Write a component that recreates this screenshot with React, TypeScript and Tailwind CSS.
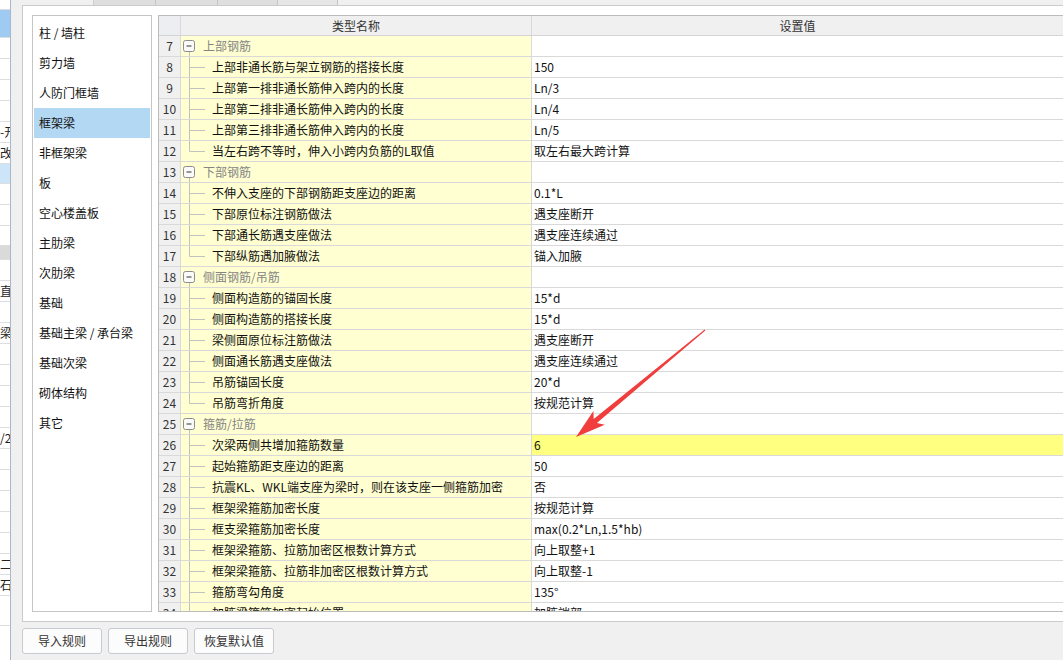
import React from "react";

type GridRow =
  | { n: number; group: string }
  | { n: number; name: string; value: string; last?: boolean; hl?: boolean };

// 左侧分类
const CATEGORIES = [
  "柱 / 墙柱",
  "剪力墙",
  "人防门框墙",
  "框架梁",
  "非框架梁",
  "板",
  "空心楼盖板",
  "主肋梁",
  "次肋梁",
  "基础",
  "基础主梁 / 承台梁",
  "基础次梁",
  "砌体结构",
  "其它",
];

const ROWS: GridRow[] = [
  { n: 7, group: "上部钢筋" },
  { n: 8, name: "上部非通长筋与架立钢筋的搭接长度", value: "150" },
  { n: 9, name: "上部第一排非通长筋伸入跨内的长度", value: "Ln/3" },
  { n: 10, name: "上部第二排非通长筋伸入跨内的长度", value: "Ln/4" },
  { n: 11, name: "上部第三排非通长筋伸入跨内的长度", value: "Ln/5" },
  { n: 12, name: "当左右跨不等时，伸入小跨内负筋的L取值", value: "取左右最大跨计算", last: true },
  { n: 13, group: "下部钢筋" },
  { n: 14, name: "不伸入支座的下部钢筋距支座边的距离", value: "0.1*L" },
  { n: 15, name: "下部原位标注钢筋做法", value: "遇支座断开" },
  { n: 16, name: "下部通长筋遇支座做法", value: "遇支座连续通过" },
  { n: 17, name: "下部纵筋遇加腋做法", value: "锚入加腋", last: true },
  { n: 18, group: "侧面钢筋/吊筋" },
  { n: 19, name: "侧面构造筋的锚固长度", value: "15*d" },
  { n: 20, name: "侧面构造筋的搭接长度", value: "15*d" },
  { n: 21, name: "梁侧面原位标注筋做法", value: "遇支座断开" },
  { n: 22, name: "侧面通长筋遇支座做法", value: "遇支座连续通过" },
  { n: 23, name: "吊筋锚固长度", value: "20*d" },
  { n: 24, name: "吊筋弯折角度", value: "按规范计算", last: true },
  { n: 25, group: "箍筋/拉筋" },
  { n: 26, name: "次梁两侧共增加箍筋数量", value: "6", hl: true },
  { n: 27, name: "起始箍筋距支座边的距离", value: "50" },
  { n: 28, name: "抗震KL、WKL端支座为梁时，则在该支座一侧箍筋加密", value: "否" },
  { n: 29, name: "框架梁箍筋加密长度", value: "按规范计算" },
  { n: 30, name: "框支梁箍筋加密长度", value: "max(0.2*Ln,1.5*hb)" },
  { n: 31, name: "框架梁箍筋、拉筋加密区根数计算方式", value: "向上取整+1" },
  { n: 32, name: "框架梁箍筋、拉筋非加密区根数计算方式", value: "向上取整-1" },
  { n: 33, name: "箍筋弯勾角度", value: "135°" },
  { n: 34, name: "加腋梁箍筋加密起始位置", value: "加腋端部" },
];

// 背后窗口露出的一条
const BACKDROP = [
  { h: 10, bg: "bg-white", text: "" },
  { h: 28, bg: "bg-[#9fcbf3]", text: "" },
  { h: 21, bg: "bg-white", text: "" },
  { h: 21, bg: "bg-white", text: "" },
  { h: 21, bg: "bg-white", text: "" },
  { h: 21, bg: "bg-white", text: "" },
  { h: 21, bg: "bg-white", text: "-开" },
  { h: 21, bg: "bg-white", text: "改打" },
  { h: 20, bg: "bg-[#cde5f8]", text: "" },
  { h: 21, bg: "bg-white", text: "" },
  { h: 21, bg: "bg-white", text: "" },
  { h: 20, bg: "bg-white", text: "" },
  { h: 14, bg: "bg-[#dadada]", text: "" },
  { h: 21, bg: "bg-white", text: "" },
  { h: 21, bg: "bg-white", text: "直" },
  { h: 21, bg: "bg-white", text: "" },
  { h: 21, bg: "bg-white", text: "梁" },
  { h: 21, bg: "bg-white", text: "" },
  { h: 21, bg: "bg-white", text: "" },
  { h: 21, bg: "bg-white", text: "" },
  { h: 21, bg: "bg-white", text: "" },
  { h: 21, bg: "bg-white", text: "/2" },
  { h: 21, bg: "bg-white", text: "" },
  { h: 21, bg: "bg-white", text: "" },
  { h: 21, bg: "bg-white", text: "" },
  { h: 21, bg: "bg-white", text: "" },
  { h: 21, bg: "bg-white", text: "" },
  { h: 21, bg: "bg-white", text: "二" },
  { h: 21, bg: "bg-white", text: "石" },
  { h: 30, bg: "bg-white", text: "" },
];

const BackdropStrip = () => (
  <div className="w-[11px] h-full shrink-0 border-r border-[#a9b8c8] bg-white flex flex-col overflow-hidden">
    {BACKDROP.map((r, i) => (
      <div
        key={i}
        className={`${r.bg} shrink-0 border-b border-[#dedede] flex items-center overflow-hidden whitespace-nowrap text-[12px] text-[#222] leading-none`}
        style={{ height: r.h }}
      >
        {r.text}
      </div>
    ))}
  </div>
);

// 树形连接线
const TreeChild = ({ last }: { last?: boolean }) => (
  <svg width="31" height="20" className="shrink-0">
    <line x1="8.5" y1="0" x2="8.5" y2={last ? 10.5 : 20} stroke="#c2c2c2" />
    <line x1="8.5" y1="10.5" x2="24" y2="10.5" stroke="#c2c2c2" />
  </svg>
);

const TreeGroup = () => (
  <svg width="22" height="20" className="shrink-0">
    <rect x="2.5" y="4.5" width="11" height="11" rx="2" fill="#fafafa" stroke="#8c8c8c" />
    <line x1="5.5" y1="10" x2="10.5" y2="10" stroke="#333" />
    <line x1="8.5" y1="16" x2="8.5" y2="20" stroke="#c2c2c2" />
  </svg>
);

const RuleRow = ({ row }: { row: GridRow }) => {
  const isGroup = "group" in row;
  return (
    <div className="h-[21px] shrink-0 flex border-b border-[#d9d9d9]">
      <div className="w-[22px] shrink-0 border-r border-[#d9d9d9] bg-[#f0f0f0] flex items-center justify-center text-[#333]">
        {row.n}
      </div>
      <div className="w-[351px] shrink-0 border-r border-[#d9d9d9] bg-[#ffffd2] flex items-center overflow-hidden whitespace-nowrap">
        {isGroup ? (
          <>
            <TreeGroup />
            <span className="text-[#858585]">{row.group}</span>
          </>
        ) : (
          <>
            <TreeChild last={row.last} />
            <span className="text-[#111]">{row.name}</span>
          </>
        )}
      </div>
      <div
        className={`flex-1 flex items-center pl-[2px] whitespace-nowrap text-[#111] ${
          !isGroup && row.hl ? "bg-[#ffff80]" : "bg-white"
        }`}
      >
        {isGroup ? "" : row.value}
      </div>
    </div>
  );
};

const TabStrip = () => (
  <div className="h-[5px] shrink-0 flex">
    <div className="w-[72px] border-r border-[#d0d0d0]" />
    <div className="w-[62px] bg-[#dedede] border-r border-[#c4c4c4]" />
    <div className="w-[62px] bg-[#dedede] border-r border-[#c4c4c4]" />
    <div className="w-[60px] bg-[#dedede] border-r border-[#c4c4c4]" />
    <div className="w-[60px] bg-[#e6e6e6] border-r border-[#c4c4c4]" />
    <div className="flex-1 bg-[#f0f0f0]" />
  </div>
);

const DialogButton = ({ label }: { label: string }) => (
  <button className="w-[80px] h-[26px] rounded-[3px] border border-[#c6cbd1] bg-[#fcfcfc] text-[12px] text-[#333] flex items-center justify-center">
    {label}
  </button>
);

const Arrow = () => (
  <svg className="absolute inset-0 pointer-events-none" width="1063" height="660">
    <polygon
      points="705.3,330.4 596.9,422.9 604.8,424.8 576,437 593.4,411 593.7,419.1 704.7,329.6"
      fill="#f23d3d"
    />
  </svg>
);

export default function App() {
  return (
    <div className="relative w-[1063px] h-[660px] overflow-hidden bg-[#f0f0f0] flex font-['Microsoft_YaHei','Noto_Sans_CJK_SC',sans-serif] text-[12px] leading-none">
      <BackdropStrip />

      <div className="flex-1 flex flex-col pl-[11px] min-w-0">
        <TabStrip />

        {/* 主面板 */}
        <div className="h-[617px] shrink-0 flex gap-[6px] bg-white border border-r-0 border-[#cbcbcb] pl-[9px] py-[9px]">
          {/* 分类列表 */}
          <div className="w-[120px] shrink-0 border border-[#c5c5c5] bg-white pt-[2px] px-px flex flex-col">
            {CATEGORIES.map((c) => (
              <div
                key={c}
                className={`h-[30px] shrink-0 flex items-center pl-[5px] text-[#111] whitespace-nowrap ${
                  c === "框架梁" ? "bg-[#b3d8f4]" : ""
                }`}
              >
                {c}
              </div>
            ))}
          </div>

          {/* 规则表格 */}
          <div className="flex-1 min-w-0 flex flex-col border border-r-0 border-[#bcbcbc] overflow-hidden">
            <div className="h-[20px] shrink-0 flex border-b border-[#d4d4d4] bg-[#f0f0f0] text-[#333]">
              <div className="w-[22px] shrink-0 border-r border-[#d9d9d9] bg-[#eceef1]" />
              <div className="w-[351px] shrink-0 border-r border-[#d9d9d9] flex items-center justify-center">
                类型名称
              </div>
              <div className="flex-1 flex items-center justify-center">设置值</div>
            </div>
            {ROWS.map((r) => (
              <RuleRow key={r.n} row={r} />
            ))}
          </div>
        </div>

        {/* 底部按钮 */}
        <div className="flex gap-[6px] mt-[6px]">
          <DialogButton label="导入规则" />
          <DialogButton label="导出规则" />
          <DialogButton label="恢复默认值" />
        </div>
      </div>

      <Arrow />
    </div>
  );
}
